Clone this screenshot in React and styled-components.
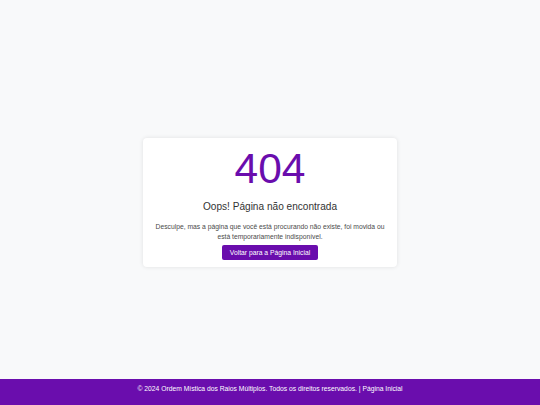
import React from "react";
import styled, { createGlobalStyle } from "styled-components";

const GlobalStyle = createGlobalStyle`
  html, body { margin: 0; padding: 0; }
  body {
    background: #f8f9fa;
    font-family: "Liberation Sans", Arial, sans-serif;
  }
  #root { min-height: 100vh; }
`;

const Page = styled.div`
  min-height: 100vh;
  display: flex;
  flex-direction: column;
`;

const Main = styled.main`
  flex: 1;
  display: flex;
  align-items: center;
  justify-content: center;
  padding-top: 26px;
`;

const Card = styled.section`
  box-sizing: border-box;
  width: 254px;
  padding: 10px 6.75px 6.75px;
  background: #ffffff;
  border-radius: 4px;
  box-shadow: 0 0 4px rgba(0, 0, 0, 0.1);
  text-align: center;
  font-size: 6.75px;
  line-height: normal;
`;

const Code = styled.h1`
  margin: 0 0 10.5px;
  font-size: 42.5px;
  font-weight: 400;
  line-height: 1;
  color: #6a0dad;
`;

const Title = styled.h2`
  margin: 0 0 9.5px;
  font-size: 10.1px;
  font-weight: 400;
  line-height: normal;
  color: #333333;
`;

const Text = styled.p`
  margin: 0 0 3.2px;
  font-size: 6.75px;
  line-height: 1.5;
  color: #4a4a4a;
`;

const Button = styled.a`
  display: inline-block;
  padding: 4px 7.5px;
  font-size: 6.75px;
  line-height: normal;
  color: #ffffff;
  background: #6a0dad;
  border-radius: 2px;
  text-decoration: none;
`;

const Footer = styled.footer`
  box-sizing: border-box;
  height: 25.7px;
  padding-top: 4.2px;
  background: #6a0dad;
  color: #ffffff;
  text-align: center;
  font-size: 6.75px;
  line-height: 1.5;
`;

const FooterLink = styled.a`
  color: #ffffff;
  text-decoration: none;
`;

export default function App() {
  return (
    <>
      <GlobalStyle />
      <Page>
        <Main>
          <Card>
            <Code>404</Code>
            <Title>Oops! Página não encontrada</Title>
            <Text>
              Desculpe, mas a página que você está procurando não existe, foi movida ou
              está temporariamente indisponível.
            </Text>
            <Button href="#">Voltar para a Página Inicial</Button>
          </Card>
        </Main>
        <Footer>
          © 2024 Ordem Mística dos Raios Múltiplos. Todos os direitos reservados. |{" "}
          <FooterLink href="#">Página Inicial</FooterLink>
        </Footer>
      </Page>
    </>
  );
}
